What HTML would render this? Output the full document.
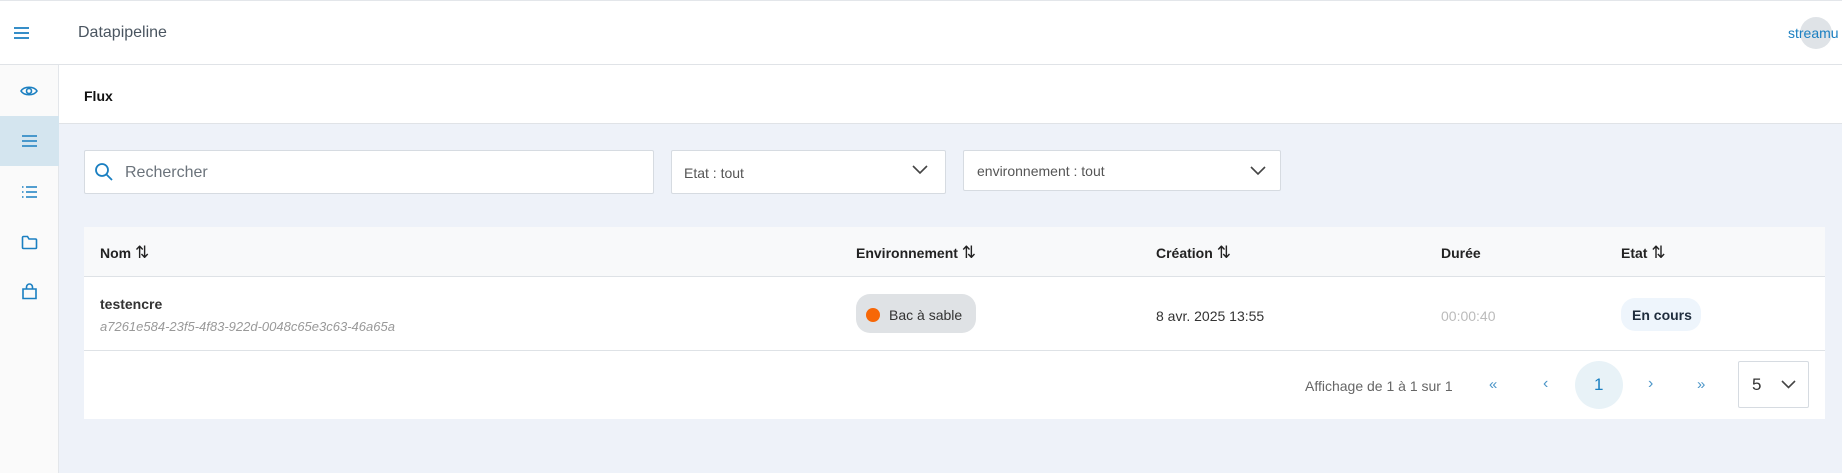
<!DOCTYPE html>
<html><head><meta charset="utf-8"><style>
*{box-sizing:border-box;margin:0;padding:0}
body{width:1842px;height:473px;overflow:hidden;background:#eef2f9;font-family:"Liberation Sans",sans-serif;position:relative;color:#333}
.abs{position:absolute}
.top{left:0;top:0;width:1842px;height:65px;background:#fff;border-top:1px solid #e3e6ea;border-bottom:1px solid #e0e3e7}
.side{left:0;top:65px;width:59px;height:408px;background:#fafafa;border-right:1px solid #e3e6ea}
.flux{left:59px;top:65px;width:1783px;height:59px;background:#fff;border-bottom:1px solid #e0e3e7}
.box{background:#fff;border:1px solid #d6dbe1;border-radius:2px}
.th{font-size:14px;font-weight:bold;color:#222;top:243px;line-height:20px;height:20px;white-space:nowrap}
.th span{font-weight:normal;font-size:17px;line-height:20px}
svg{position:absolute}
</style></head><body>
<div class="abs top"></div>
<svg style="left:13px;top:25px" width="17" height="16" viewBox="0 0 17 16"><path d="M1 3h15M1 8h15M1 13h15" stroke="#1a7fc1" stroke-width="1.8"/></svg>
<div class="abs" style="left:78px;top:24px;font-size:16px;color:#4a5560">Datapipeline</div>
<div class="abs" style="left:1800px;top:17px;width:32px;height:32px;border-radius:50%;background:#dfe3e7"></div>
<div class="abs" style="left:1788px;top:25px;font-size:14px;color:#1a7fc1">streamu</div>
<div class="abs side"></div>
<div class="abs" style="left:0;top:116px;width:59px;height:50px;background:#d4e5ef"></div>
<svg style="left:20px;top:83px" width="18" height="16" viewBox="0 0 18 16"><path d="M1 8C4 3 14 3 17 8C14 13 4 13 1 8Z" fill="none" stroke="#1a7fc1" stroke-width="1.6"/><circle cx="9" cy="8" r="2.5" fill="none" stroke="#1a7fc1" stroke-width="1.6"/></svg>
<svg style="left:21px;top:134px" width="17" height="14" viewBox="0 0 17 14"><path d="M1 2h15M1 7h15M1 12h15" stroke="#1a7fc1" stroke-width="1.6"/></svg>
<svg style="left:21px;top:185px" width="17" height="14" viewBox="0 0 17 14"><path d="M5 2h11M5 7h11M5 12h11M1 2h1.5M1 7h1.5M1 12h1.5" stroke="#1a7fc1" stroke-width="1.6"/></svg>
<svg style="left:21px;top:235px" width="17" height="15" viewBox="0 0 17 15"><path d="M1.5 2.5v10a1 1 0 0 0 1 1h12a1 1 0 0 0 1-1V5a1 1 0 0 0-1-1H8L6.5 1.5H2.5a1 1 0 0 0-1 1Z" fill="none" stroke="#1a7fc1" stroke-width="1.6"/></svg>
<svg style="left:21px;top:283px" width="17" height="17" viewBox="0 0 17 17"><path d="M2 6h13v9.5H2Z M5.5 6V4a3 3 0 0 1 6 0v2" fill="none" stroke="#1a7fc1" stroke-width="1.6"/></svg>
<div class="abs flux"></div>
<div class="abs" style="left:84px;top:88px;font-size:14px;font-weight:bold;color:#111">Flux</div>
<div class="abs box" style="left:84px;top:150px;width:570px;height:44px"></div>
<svg style="left:94px;top:162px" width="20" height="20" viewBox="0 0 20 20"><circle cx="8" cy="8" r="6" fill="none" stroke="#1a7fc1" stroke-width="1.8"/><path d="M12.5 12.5L18 18" stroke="#1a7fc1" stroke-width="1.8"/></svg>
<div class="abs" style="left:125px;top:164px;font-size:16px;color:#6b737b">Rechercher</div>
<div class="abs box" style="left:671px;top:150px;width:275px;height:44px"></div>
<div class="abs" style="left:684px;top:165px;font-size:14px;color:#555">Etat : tout</div>
<svg style="left:912px;top:165px" width="16" height="10" viewBox="0 0 16 10"><path d="M1 1l7 7 7-7" fill="none" stroke="#444" stroke-width="1.6"/></svg>
<div class="abs box" style="left:963px;top:150px;width:318px;height:41px"></div>
<div class="abs" style="left:977px;top:163px;font-size:14px;color:#555">environnement : tout</div>
<svg style="left:1250px;top:166px" width="16" height="10" viewBox="0 0 16 10"><path d="M1 1l7 7 7-7" fill="none" stroke="#444" stroke-width="1.6"/></svg>
<div class="abs" style="left:84px;top:227px;width:1741px;height:192px;background:#fff"></div>
<div class="abs" style="left:84px;top:227px;width:1741px;height:50px;background:#f8f9fa;border-bottom:1px solid #dee2e6"></div>
<div class="abs" style="left:84px;top:350px;width:1741px;height:1px;background:#dee2e6"></div>
<div class="abs th" style="left:100px">Nom <span>⇅</span></div>
<div class="abs th" style="left:856px">Environnement <span>⇅</span></div>
<div class="abs th" style="left:1156px">Création <span>⇅</span></div>
<div class="abs th" style="left:1441px">Durée</div>
<div class="abs th" style="left:1621px">Etat <span>⇅</span></div>
<div class="abs" style="left:100px;top:296px;font-size:14px;font-weight:bold;color:#333">testencre</div>
<div class="abs" style="left:100px;top:319px;font-size:13px;font-style:italic;color:#999">a7261e584-23f5-4f83-922d-0048c65e3c63-46a65a</div>
<div class="abs" style="left:856px;top:294px;width:120px;height:39px;border-radius:14px;background:#dfe2e5"></div>
<div class="abs" style="left:866px;top:308px;width:14px;height:14px;border-radius:50%;background:#f76707"></div>
<div class="abs" style="left:889px;top:307px;font-size:14px;color:#333">Bac à sable</div>
<div class="abs" style="left:1156px;top:308px;font-size:14px;color:#333">8 avr. 2025 13:55</div>
<div class="abs" style="left:1441px;top:308px;font-size:14px;color:#bbb">00:00:40</div>
<div class="abs" style="left:1621px;top:298px;width:80px;height:33px;border-radius:14px;background:#eef5fc"></div>
<div class="abs" style="left:1632px;top:307px;font-size:14px;font-weight:bold;color:#1f2d3d">En cours</div>
<div class="abs" style="left:1305px;top:378px;font-size:14px;color:#666">Affichage de 1 à 1 sur 1</div>
<div class="abs" style="left:1489px;top:376px;font-size:15px;color:#4d96c8">«</div>
<div class="abs" style="left:1543px;top:375px;font-size:16px;color:#4d96c8">‹</div>
<div class="abs" style="left:1575px;top:361px;width:48px;height:48px;border-radius:50%;background:#e8f2f7"></div>
<div class="abs" style="left:1594px;top:375px;font-size:17px;color:#1a7fc1">1</div>
<div class="abs" style="left:1648px;top:375px;font-size:16px;color:#4d96c8">›</div>
<div class="abs" style="left:1697px;top:376px;font-size:15px;color:#4d96c8">»</div>
<div class="abs box" style="left:1738px;top:361px;width:71px;height:47px"></div>
<div class="abs" style="left:1752px;top:375px;font-size:17px;color:#333">5</div>
<svg style="left:1781px;top:380px" width="15" height="9" viewBox="0 0 15 9"><path d="M1 1l6.5 6.5L14 1" fill="none" stroke="#444" stroke-width="1.6"/></svg>
</body></html>
